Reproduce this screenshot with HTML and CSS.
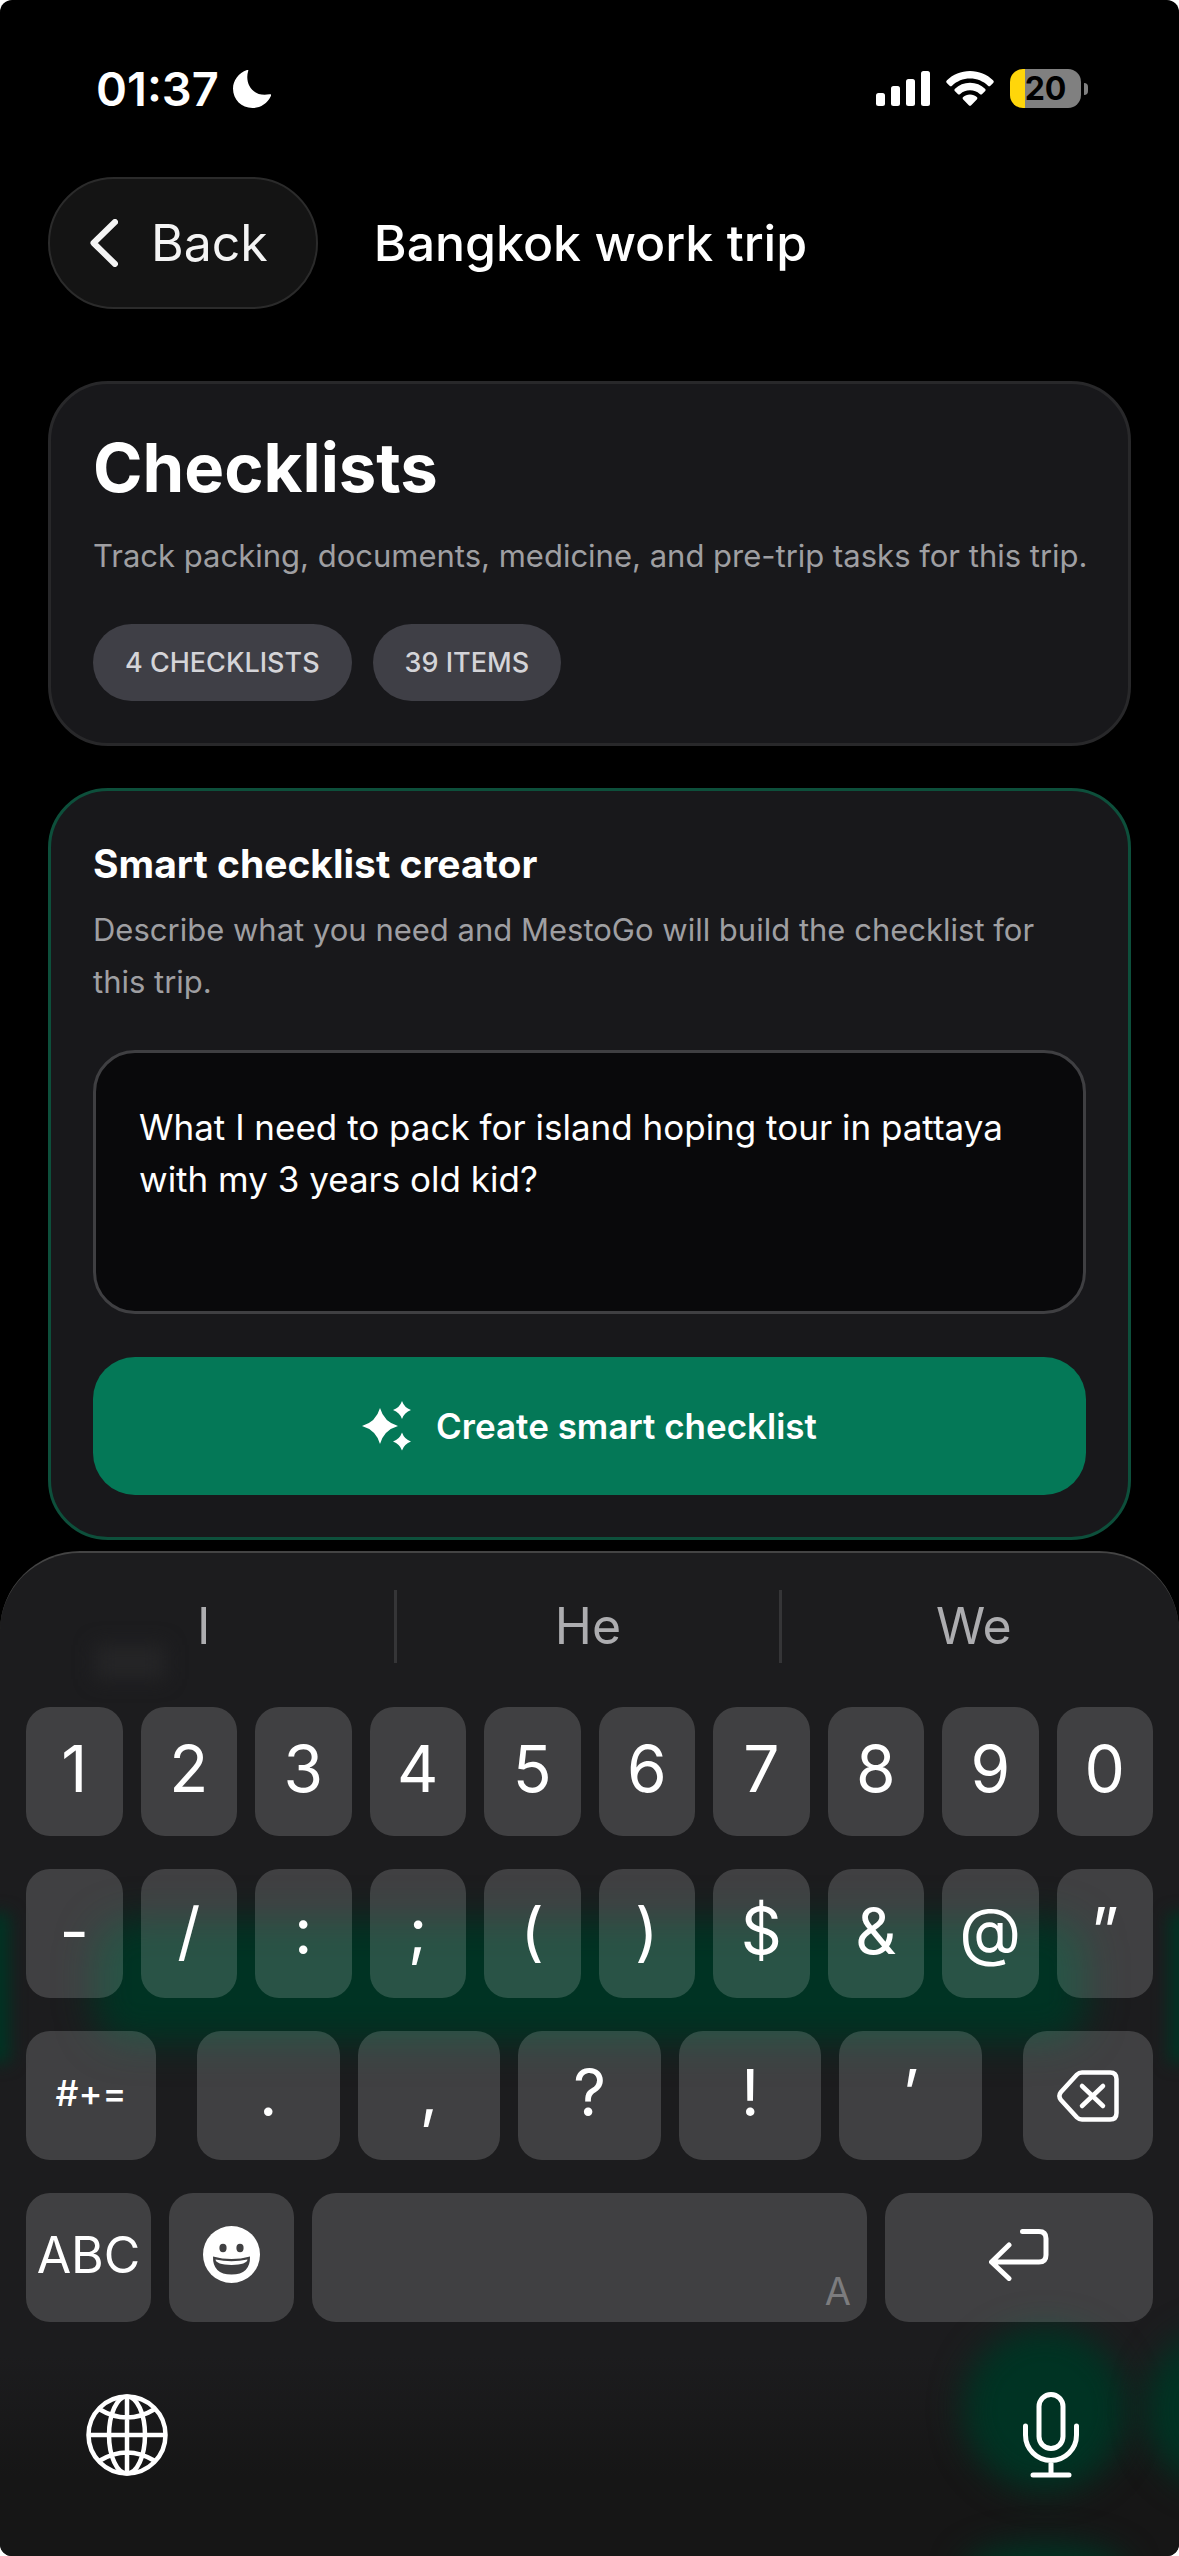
FILE: index.html
```html
<!DOCTYPE html>
<html lang="en">
<head>
  <meta charset="utf-8">
  <meta name="viewport" content="width=device-width, initial-scale=1">
  <title>Bangkok work trip - Checklists</title>
  <link rel="stylesheet" href="styles.css">
</head>
<body>
<div class="app">
  <div class="status-bar">
    <div class="status-left">
      <span class="clock">01:37</span>
      <svg class="moon" viewBox="0 0 38 38" fill="#fff"><path d="M14 0C15-.5 15.600 0 15.200 1 11.500 13 19 27.500 36.500 24.200 38 24 38.500 24.800 37.900 26 34 34 27 38 19.500 38 8.500 38 0 29.500 0 18.500 0 10.500 5.500 3 14 0Z"/></svg>
    </div>
    <div class="status-right">
      <svg class="signal" viewBox="0 0 54 35" fill="#fff"><rect y="22" width="9" height="13" rx="2.500"/><rect x="15" y="15" width="9" height="20" rx="2.500"/><rect x="30" y="8" width="9" height="27" rx="2.500"/><rect x="45" width="9" height="35" rx="2.500"/></svg>
      <svg class="wifi" viewBox="0 0 48 35" fill="#fff"><path d="M24 0C33 0 41 3.500 47 9.200 48 10.100 48 11 47.200 11.900L44.400 14.700C43.600 15.500 42.800 15.400 42 14.700 37 10.200 31 7.600 24 7.600S11 10.200 6 14.700C5.200 15.400 4.400 15.500 3.600 14.700L.8 11.900C0 11 0 10.100 1 9.200 7 3.500 15 0 24 0Z"/><path d="M24 11.800C30 11.800 35 14 39 17.700 39.800 18.500 39.800 19.400 39 20.200L36.200 23C35.400 23.800 34.600 23.700 33.800 23 31 20.600 28 19.300 24 19.300S17 20.600 14.200 23C13.400 23.700 12.600 23.800 11.800 23L9 20.200C8.200 19.400 8.200 18.500 9 17.700 13 14 18 11.800 24 11.800Z"/><path d="M24 23.600C26.800 23.600 29 24.500 30.800 26 31.600 26.700 31.600 27.600 30.800 28.400L25.200 34.200C24.500 35 23.500 35 22.800 34.200L17.200 28.400C16.400 27.600 16.400 26.700 17.200 26 19 24.500 21.200 23.600 24 23.600Z"/></svg>
      <div class="battery"><span class="battery-level">20</span></div>
    </div>
  </div>

  <header class="top-nav">
    <button type="button" class="back-btn">
      <svg class="chevron" viewBox="0 0 28 48" fill="none" stroke="#f4f4f4" stroke-width="6" stroke-linecap="round" stroke-linejoin="round"><path d="M25 3 3.500 24 25 45"/></svg>
      Back
    </button>
    <h1 class="page-title">Bangkok work trip</h1>
  </header>

  <main class="content">
    <section class="card">
      <h2 class="card-heading">Checklists</h2>
      <p class="card-text card-summary">Track packing, documents, medicine, and pre-trip tasks for this trip.</p>
      <div class="chips">
        <span class="chip">4 CHECKLISTS</span>
        <span class="chip">39 ITEMS</span>
      </div>
    </section>

    <form class="card card-smart">
      <h2 class="smart-heading"><label for="prompt">Smart checklist creator</label></h2>
      <p class="card-text">Describe what you need and MestoGo will build the checklist for this trip.</p>
      <textarea id="prompt" class="prompt" rows="3">What I need to pack for island hoping tour in pattaya with my 3 years old kid?</textarea>
      <button type="button" class="create-btn">
        <svg class="sparkles" viewBox="0 0 50 50" fill="#fff"><path d="M18 7Q22 21 36 25 22 29 18 43 14 29 0 25 14 21 18 7Z"/><path d="M40 0Q42.300 6.700 49 9 42.300 11.300 40 18 37.700 11.300 31 9 37.700 6.700 40 0Z"/><path d="M40 31.500Q42.300 38.200 49 40.500 42.300 42.800 40 49.500 37.700 42.800 31 40.500 37.700 38.200 40 31.500Z"/></svg>
        Create smart checklist
      </button>
    </form>
  </main>

  <section class="keyboard" aria-label="Keyboard">
    <!-- page content showing through the glass -->
    <span class="glow glow-bar"></span>
    <span class="glow glow-left"></span>
    <span class="glow glow-right"></span>
    <span class="glow glow-circle"></span>
    <span class="glow glow-corner"></span>
    <span class="glow glow-bottom"></span>
    <span class="glow glow-grey"></span>

    <div class="suggestions">
      <button type="button">I</button>
      <button type="button">He</button>
      <button type="button">We</button>
    </div>

    <div class="keys">
      <div class="key-row">
        <button type="button" class="key">1</button>
        <button type="button" class="key">2</button>
        <button type="button" class="key">3</button>
        <button type="button" class="key">4</button>
        <button type="button" class="key">5</button>
        <button type="button" class="key">6</button>
        <button type="button" class="key">7</button>
        <button type="button" class="key">8</button>
        <button type="button" class="key">9</button>
        <button type="button" class="key">0</button>
      </div>
      <div class="key-row">
        <button type="button" class="key">-</button>
        <button type="button" class="key">/</button>
        <button type="button" class="key">:</button>
        <button type="button" class="key">;</button>
        <button type="button" class="key">(</button>
        <button type="button" class="key">)</button>
        <button type="button" class="key">$</button>
        <button type="button" class="key">&amp;</button>
        <button type="button" class="key">@</button>
        <button type="button" class="key">”</button>
      </div>
      <div class="key-row row-punct">
        <button type="button" class="key key-more">#+=</button>
        <div class="key-group">
          <button type="button" class="key">.</button>
          <button type="button" class="key">,</button>
          <button type="button" class="key">?</button>
          <button type="button" class="key">!</button>
          <button type="button" class="key">’</button>
        </div>
        <button type="button" class="key key-delete" aria-label="Delete">
          <svg class="icon-delete" viewBox="0 0 62 56" fill="none" stroke="#fff" stroke-width="4.500" stroke-linecap="round" stroke-linejoin="round"><path d="M25 4.500H53Q59.500 4.500 59.500 11V45Q59.500 51.500 53 51.500H25Q22 51.500 20 49.500L4 32Q.8 28 4 24L20 6.500Q22 4.500 25 4.500Z"/><path d="M25 18 46 38M46 18 25 38"/></svg>
        </button>
      </div>
      <div class="key-row row-space">
        <button type="button" class="key key-abc">ABC</button>
        <button type="button" class="key" aria-label="Emoji">
          <svg class="icon-emoji" viewBox="0 0 57 57"><circle cx="28.500" cy="28.500" r="28.500" fill="#fff"/><ellipse cx="20" cy="22" rx="3.600" ry="4.200" fill="#404042"/><ellipse cx="37" cy="22" rx="3.600" ry="4.200" fill="#404042"/><path d="M10 30.500Q28.500 35.500 47 30.500 47.500 48.500 28.500 48.500 9.500 48.500 10 30.500Z" fill="#404042"/><path d="M12.500 33.500Q28.500 37 44.500 33.500 44 38.500 28.500 39 13 38.500 12.500 33.500Z" fill="#fff"/></svg>
        </button>
        <button type="button" class="key key-space" aria-label="Space">A</button>
        <button type="button" class="key" aria-label="Return">
          <svg class="icon-return" viewBox="0 0 60 52" fill="none" stroke="#fff" stroke-width="5" stroke-linecap="round" stroke-linejoin="round"><path d="M33.500 2.500H50Q57 2.500 57 9.500V26Q57 33 50 33H3M20 16 2.500 33 20 49.500"/></svg>
        </button>
      </div>
    </div>

    <div class="key-footer">
      <button type="button" aria-label="Next keyboard">
        <svg class="icon-globe" viewBox="0 0 82 82" fill="none" stroke="#fff" stroke-width="4.500"><circle cx="41" cy="41" r="38.500"/><ellipse cx="41" cy="41" rx="18" ry="38.500"/><path d="M41 2.500V79.500M2.500 41H79.500M13 15Q41 32 69 15M13 67Q41 50 69 67"/></svg>
      </button>
      <button type="button" aria-label="Dictate">
        <svg class="icon-mic" viewBox="0 0 56 86" fill="none" stroke="#fff" stroke-width="5" stroke-linecap="round"><rect x="16" y="2.500" width="24" height="54" rx="12"/><path d="M2.500 34V43A25.500 25.500 0 0 0 53.500 43V34M28 69V83M10 83H46"/></svg>
      </button>
    </div>
  </section>
</div>
</body>
</html>
```

FILE: styles.css
```css
* {
  box-sizing: border-box;
  margin: 0;
  padding: 0;
}

body {
  font-family: Inter, "Liberation Sans", sans-serif;
  background: #fff;
  color: #fff;
}

button {
  font-family: inherit;
  color: inherit;
  border: none;
  background: none;
  cursor: pointer;
}

svg {
  display: block;
  flex: none;
}

.app {
  display: flex;
  flex-direction: column;
  min-height: 100vh;
  background: #000;
  border-radius: 12px;
  overflow: hidden;
}

/* Status bar */
.status-bar {
  display: flex;
  justify-content: space-between;
  align-items: center;
  height: 177px;
  padding: 0 91px 0 96px;
}

.status-left,
.status-right {
  display: flex;
  align-items: center;
  gap: 16px;
}

.status-left {
  gap: 14px;
}

.clock {
  font-size: 47px;
  font-weight: 600;
}

.moon {
  width: 38px;
  height: 38px;
}

.signal {
  width: 54px;
  height: 35px;
}

.wifi {
  width: 48px;
  height: 35px;
}

.battery {
  display: flex;
  align-items: center;
  gap: 3px;
}

.battery-level {
  display: flex;
  align-items: center;
  justify-content: center;
  width: 71px;
  height: 39px;
  border-radius: 13px;
  background: linear-gradient(90deg, #ffd60a 15px, #808080 15px);
  color: #000;
  font-size: 32px;
  font-weight: 700;
}

.battery::after {
  content: "";
  width: 4px;
  height: 12px;
  border-radius: 0 4px 4px 0;
  background: #808080;
}

/* Navigation */
.top-nav {
  display: flex;
  align-items: center;
  gap: 56px;
  padding: 0 48px;
  margin-bottom: 72px;
}

.back-btn {
  display: flex;
  align-items: center;
  gap: 33px;
  height: 132px;
  padding: 0 48px 0 40px;
  border: 2px solid #2b2b2b;
  border-radius: 66px;
  background: #141414;
  color: #f4f4f4;
  font-size: 50px;
}

.chevron {
  width: 28px;
  height: 48px;
}

.page-title {
  font-size: 50px;
  font-weight: 500;
}

/* Cards */
.content {
  display: flex;
  flex-direction: column;
  gap: 42px;
  padding: 0 48px;
}

.card {
  padding: 42px;
  border: 3px solid #28282a;
  border-radius: 60px;
  background: #18181b;
}

.card-smart {
  border-color: #0d4f3b;
}

.card-heading {
  font-size: 67px;
  font-weight: 700;
  line-height: 84px;
  margin-bottom: 20px;
}

.smart-heading {
  font-size: 39px;
  font-weight: 700;
  line-height: 62px;
  margin-bottom: 9px;
}

.card-text {
  color: #9f9fa2;
  font-size: 31px;
  line-height: 52px;
  margin-bottom: 42px;
}

.card-summary {
  white-space: nowrap;
}

.chips {
  display: flex;
  gap: 21px;
}

.chip {
  padding: 0 32px;
  border-radius: 39px;
  background: #3f3f46;
  color: #d4d4d8;
  font-size: 27px;
  font-weight: 500;
  line-height: 77px;
}

.prompt {
  display: block;
  width: 100%;
  padding: 48px 43px 54px;
  margin-bottom: 43px;
  border: 3px solid #3f3f42;
  border-radius: 42px;
  background: #09090b;
  color: #fff;
  font-family: inherit;
  font-size: 35px;
  line-height: 52px;
  resize: none;
  outline: none;
}

.create-btn {
  display: flex;
  align-items: center;
  justify-content: center;
  gap: 24px;
  width: 100%;
  height: 138px;
  border-radius: 42px;
  background: #047857;
  font-size: 35px;
  font-weight: 600;
}

.sparkles {
  width: 50px;
  height: 50px;
}

/* Keyboard */
.keyboard {
  position: relative;
  display: flex;
  flex-direction: column;
  margin-top: auto;
  border-top: 2px solid #444;
  border-radius: 80px 80px 0 0;
  background: linear-gradient(#1c1c1e 80%, #161616 92%);
  overflow: hidden;
}

.suggestions,
.keys,
.key-footer {
  position: relative;
}

.suggestions {
  display: grid;
  grid-template-columns: repeat(3, 1fr);
  padding: 37px 13px 44px;
}

.suggestions button {
  height: 73px;
  color: #adadb0;
  font-size: 50px;
  line-height: 73px;
}

.suggestions button:not(:last-child) {
  border-right: 3px solid #353537;
}

.keys {
  display: flex;
  flex-direction: column;
  gap: 33px;
  padding: 0 26px;
}

.key-row,
.key-group {
  display: flex;
  gap: 18px;
}

.row-punct {
  display: grid;
  grid-template-columns: 130fr 785fr 130fr;
  gap: 41px;
}

.row-space {
  display: grid;
  grid-template-columns: 125fr 125fr 555fr 268fr;
}

.key {
  display: flex;
  flex: 1;
  align-items: center;
  justify-content: center;
  min-width: 0;
  height: 129px;
  padding-bottom: 6px;
  border-radius: 24px;
  background: rgba(255, 255, 255, 0.16);
  font-size: 64px;
}

.key-more {
  font-size: 36px;
  font-weight: 500;
}

.key-abc {
  font-size: 50px;
}

.key-delete {
  padding-bottom: 0;
}

.key-space {
  align-items: flex-end;
  justify-content: flex-end;
  padding: 0 16px 8px;
  color: #7c7c7e;
  font-size: 38px;
}

.icon-delete {
  width: 62px;
  height: 56px;
}

.icon-emoji {
  width: 57px;
  height: 57px;
}

.icon-return {
  width: 60px;
  height: 52px;
}

.key-footer {
  display: flex;
  align-items: center;
  justify-content: space-between;
  height: 234px;
  padding: 0 100px 8px 86px;
}

.icon-globe {
  width: 82px;
  height: 82px;
}

.icon-mic {
  width: 56px;
  height: 86px;
}

.glow {
  position: absolute;
  background: #003323;
  filter: blur(16px);
}

.glow-bar {
  top: 366px;
  left: 94px;
  right: 92px;
  height: 124px;
  border-radius: 36px;
  filter: blur(18px);
}

.glow-left,
.glow-right {
  top: 360px;
  width: 44px;
  height: 150px;
  filter: blur(8px);
}

.glow-left {
  left: -34px;
}

.glow-right {
  right: -34px;
}

.glow-circle {
  top: 774px;
  right: 52px;
  width: 164px;
  height: 164px;
  border-radius: 50%;
}

.glow-corner {
  top: 774px;
  right: -130px;
  width: 164px;
  height: 164px;
  border-radius: 50%;
}

.glow-bottom {
  top: 990px;
  right: 52px;
  width: 164px;
  height: 60px;
  border-radius: 50%;
}

.glow-grey {
  top: 92px;
  left: 95px;
  width: 70px;
  height: 34px;
  background: #252527;
  filter: blur(10px);
}
```
